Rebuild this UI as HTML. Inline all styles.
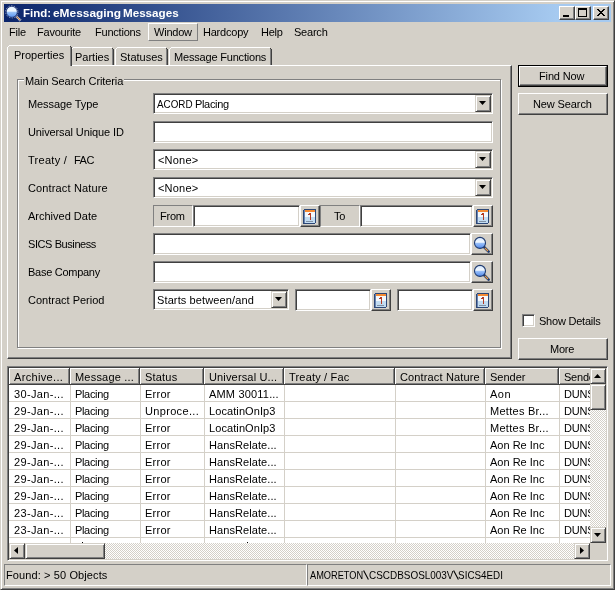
<!DOCTYPE html><html><head><meta charset="utf-8"><style>
*{box-sizing:border-box;margin:0;padding:0}
html,body{width:615px;height:590px;overflow:hidden;background:#D4D0C8;font-family:"Liberation Sans",sans-serif;font-size:11px;color:#000}
.a{position:absolute}
.t{position:absolute;white-space:nowrap;line-height:13px;letter-spacing:-0.22px}
.rb{position:absolute;background:#D4D0C8;border:1px solid;border-color:#fff #404040 #404040 #fff;box-shadow:inset -1px -1px #808080}
.sf{position:absolute;background:#fff;border:1px solid;border-color:#808080 #fff #fff #808080;box-shadow:inset 1px 1px #404040,inset -1px -1px #D4D0C8}
.st{position:absolute;border:1px solid;border-color:#808080 #fff #fff #808080}
.hc{position:absolute;top:368px;height:17px;background:#D4D0C8;border-right:1px solid #404040;border-bottom:1px solid #404040;box-shadow:inset 1px 1px #fff,inset -1px -1px #808080}
.sb{position:absolute;background:#D4D0C8;border:1px solid;border-color:#D4D0C8 #404040 #404040 #D4D0C8;box-shadow:inset 1px 1px #fff,inset -1px -1px #808080}
.chk{background-image:repeating-conic-gradient(#fff 0 25%,#D4D0C8 0 50%);background-size:2px 2px}
</style></head><body><div class="a" style="left:0;top:0;width:615px;height:590px;will-change:transform">
<div class="a" style="left:0;top:0;width:615px;height:590px;border:1px solid;border-color:#D4D0C8 #404040 #404040 #D4D0C8;box-shadow:inset 1px 1px #fff,inset -1px -1px #808080"></div>
<div class="a" style="left:4px;top:4px;width:607px;height:18px;background:linear-gradient(to right,#0A246A 0,#A6CAF0 553px);"></div>
<svg class="a" style="left:4px;top:4px" width="18" height="18" viewBox="0 0 18 18">
<defs><linearGradient id="mg" x1="0" y1="0" x2="0" y2="1"><stop offset="0" stop-color="#e4f2ff"/><stop offset="0.45" stop-color="#f0f8ff"/><stop offset="0.52" stop-color="#9cc4f8"/><stop offset="1" stop-color="#5a94f0"/></linearGradient></defs>
<line x1="12.5" y1="12.5" x2="16.6" y2="16.6" stroke="#c8ccd8" stroke-width="2.8" stroke-dasharray="1 0.6"/>
<line x1="12.8" y1="12.8" x2="16.2" y2="16.2" stroke="#f09030" stroke-width="1.1" stroke-dasharray="1 0.7"/>
<circle cx="7.8" cy="7.8" r="6.0" fill="none" stroke="#d8dee8" stroke-width="1" stroke-dasharray="1.1 1.6"/>
<circle cx="7.8" cy="7.8" r="5.5" fill="url(#mg)" stroke="#283c78" stroke-width="0.8"/>
</svg>
<div class="t" style="left:23px;top:7px;letter-spacing:0;transform:scaleX(1.0417);transform-origin:1px 0;color:#fff;font-weight:bold">Find:</div>
<div class="t" style="left:53px;top:7px;letter-spacing:0;transform:scaleX(1.0820);transform-origin:0px 0;color:#fff;font-weight:bold">eMessaging</div>
<div class="t" style="left:123px;top:7px;letter-spacing:0;transform:scaleX(1.0600);transform-origin:1px 0;color:#fff;font-weight:bold">Messages</div>
<div class="rb" style="left:559px;top:6px;width:16px;height:14px;"></div>
<div class="rb" style="left:575px;top:6px;width:16px;height:14px;"></div>
<div class="rb" style="left:593px;top:6px;width:16px;height:14px;"></div>
<div class="a" style="left:563px;top:15px;width:6px;height:2px;background:#000"></div>
<div class="a" style="left:578px;top:8px;width:9px;height:9px;border:1px solid #000;border-top-width:2px"></div>
<svg class="a" style="left:597px;top:9px" width="8" height="7" viewBox="0 0 8 7" shape-rendering="crispEdges"><path d="M0 0h1v1h-1zM1 0h1v1h-1zM6 0h1v1h-1zM7 0h1v1h-1zM1 1h1v1h-1zM2 1h1v1h-1zM5 1h1v1h-1zM6 1h1v1h-1zM2 2h1v1h-1zM3 2h1v1h-1zM4 2h1v1h-1zM5 2h1v1h-1zM3 3h1v1h-1zM4 3h1v1h-1zM2 4h1v1h-1zM3 4h1v1h-1zM4 4h1v1h-1zM5 4h1v1h-1zM1 5h1v1h-1zM2 5h1v1h-1zM5 5h1v1h-1zM6 5h1v1h-1zM0 6h1v1h-1zM1 6h1v1h-1zM6 6h1v1h-1zM7 6h1v1h-1z" fill="#000"/></svg>
<div class="t" style="left:9px;top:26px;">File</div>
<div class="t" style="left:37px;top:26px;">Favourite</div>
<div class="t" style="left:95px;top:26px;">Functions</div>
<div class="t" style="left:154px;top:26px;">Window</div>
<div class="t" style="left:203px;top:26px;">Hardcopy</div>
<div class="t" style="left:261px;top:26px;">Help</div>
<div class="t" style="left:294px;top:26px;">Search</div>
<div class="a" style="left:148px;top:23px;width:50px;height:18px;border:1px solid;border-color:#fff #808080 #808080 #fff"></div>
<div class="a" style="left:71px;top:49px;width:1px;height:16px;background:#fff;"></div>
<div class="a" style="left:72px;top:48px;width:1px;height:1px;background:#fff;"></div>
<div class="a" style="left:73px;top:47px;width:39px;height:1px;background:#fff;"></div>
<div class="a" style="left:112px;top:48px;width:1px;height:1px;background:#404040;"></div>
<div class="a" style="left:112px;top:49px;width:1px;height:16px;background:#808080;"></div>
<div class="a" style="left:113px;top:49px;width:1px;height:16px;background:#404040;"></div>
<div class="t" style="left:75px;top:51px;letter-spacing:0.000px;">Parties</div>
<div class="a" style="left:115px;top:49px;width:1px;height:16px;background:#fff;"></div>
<div class="a" style="left:116px;top:48px;width:1px;height:1px;background:#fff;"></div>
<div class="a" style="left:117px;top:47px;width:49px;height:1px;background:#fff;"></div>
<div class="a" style="left:166px;top:48px;width:1px;height:1px;background:#404040;"></div>
<div class="a" style="left:166px;top:49px;width:1px;height:16px;background:#808080;"></div>
<div class="a" style="left:167px;top:49px;width:1px;height:16px;background:#404040;"></div>
<div class="t" style="left:120px;top:51px;letter-spacing:0.000px;">Statuses</div>
<div class="a" style="left:169px;top:49px;width:1px;height:16px;background:#fff;"></div>
<div class="a" style="left:170px;top:48px;width:1px;height:1px;background:#fff;"></div>
<div class="a" style="left:171px;top:47px;width:99px;height:1px;background:#fff;"></div>
<div class="a" style="left:270px;top:48px;width:1px;height:1px;background:#404040;"></div>
<div class="a" style="left:270px;top:49px;width:1px;height:16px;background:#808080;"></div>
<div class="a" style="left:271px;top:49px;width:1px;height:16px;background:#404040;"></div>
<div class="t" style="left:174px;top:51px;letter-spacing:-0.188px;">Message Functions</div>
<div class="a" style="left:7px;top:65px;width:505px;height:294px;border:1px solid;border-color:#fff #404040 #404040 #fff;box-shadow:inset -1px -1px #808080"></div>
<div class="a" style="left:7px;top:45px;width:65px;height:21px;background:#D4D0C8;"></div>
<div class="a" style="left:7px;top:47px;width:1px;height:19px;background:#fff;"></div>
<div class="a" style="left:8px;top:46px;width:1px;height:1px;background:#fff;"></div>
<div class="a" style="left:9px;top:45px;width:61px;height:1px;background:#fff;"></div>
<div class="a" style="left:70px;top:46px;width:1px;height:1px;background:#404040;"></div>
<div class="a" style="left:70px;top:47px;width:1px;height:19px;background:#808080;"></div>
<div class="a" style="left:71px;top:47px;width:1px;height:19px;background:#404040;"></div>
<div class="t" style="left:14px;top:49px;letter-spacing:0.000px;">Properties</div>
<div class="a" style="left:17px;top:79px;width:484px;height:269px;border:1px solid #808080;box-shadow:1px 1px #fff,inset 1px 1px #fff"></div>
<div class="t" style="left:24px;top:75px;letter-spacing:-0.105px;background:#D4D0C8;padding:0 1px 0 1px">Main Search Criteria</div>
<div class="t" style="left:28px;top:98px;letter-spacing:-0.091px;">Message Type</div>
<div class="t" style="left:28px;top:126px;letter-spacing:-0.111px;">Universal Unique ID</div>
<div class="t" style="left:28px;top:154px;letter-spacing:0.286px;">Treaty /</div>
<div class="t" style="left:28px;top:182px;letter-spacing:0.143px;">Contract Nature</div>
<div class="t" style="left:28px;top:210px;letter-spacing:0.000px;">Archived Date</div>
<div class="t" style="left:28px;top:238px;letter-spacing:-0.417px;">SICS Business</div>
<div class="t" style="left:28px;top:266px;letter-spacing:-0.273px;">Base Company</div>
<div class="t" style="left:28px;top:294px;letter-spacing:0.000px;">Contract Period</div>
<div class="t" style="left:74px;top:154px;letter-spacing:-0.500px;">FAC</div>
<div class="sf" style="left:153px;top:93px;width:340px;height:21px;"></div>
<div class="sb" style="left:475px;top:95px;width:16px;height:17px;"></div>
<svg class="a" style="left:479px;top:101px" width="7" height="4" viewBox="0 0 7 4"><path d="M0 0H7L3.5 4Z" fill="#000"/></svg>
<div class="t" style="left:157px;top:98px;letter-spacing:0;transform:scaleX(0.8947);transform-origin:0px 0;">ACORD</div>
<div class="t" style="left:195px;top:98px;letter-spacing:-0.333px;">Placing</div>
<div class="sf" style="left:153px;top:121px;width:340px;height:22px;"></div>
<div class="sf" style="left:153px;top:149px;width:340px;height:21px;"></div>
<div class="t" style="left:158px;top:154px;letter-spacing:0.200px;">&lt;None&gt;</div>
<div class="sb" style="left:475px;top:151px;width:16px;height:17px;"></div>
<svg class="a" style="left:479px;top:157px" width="7" height="4" viewBox="0 0 7 4"><path d="M0 0H7L3.5 4Z" fill="#000"/></svg>
<div class="sf" style="left:153px;top:177px;width:340px;height:21px;"></div>
<div class="t" style="left:158px;top:182px;letter-spacing:0.200px;">&lt;None&gt;</div>
<div class="sb" style="left:475px;top:179px;width:16px;height:17px;"></div>
<svg class="a" style="left:479px;top:185px" width="7" height="4" viewBox="0 0 7 4"><path d="M0 0H7L3.5 4Z" fill="#000"/></svg>
<div class="st" style="left:153px;top:205px;width:40px;height:22px;"></div>
<div class="t" style="left:160px;top:210px;">From</div>
<div class="sf" style="left:193px;top:205px;width:107px;height:22px;"></div>
<div class="rb" style="left:300px;top:205px;width:20px;height:22px;"></div>
<svg class="a" style="left:303px;top:209px" width="13" height="15" viewBox="0 0 13 15" shape-rendering="crispEdges">
<rect x="0" y="0" width="13" height="15" rx="2" fill="#2B4676"/>
<rect x="1" y="1" width="11" height="13" fill="#fff"/>
<rect x="1" y="1" width="1" height="13" fill="#6a84b0"/>
<rect x="2" y="8" width="10" height="6" fill="#C2DCF2"/>
<rect x="2" y="1" width="10" height="2" fill="#F58A33"/>
<rect x="2" y="3" width="10" height="5" fill="#F4F8FC"/>
<path d="M5 5H6V4H8V11H7V6H5Z" fill="#B33A22"/>
<rect x="3" y="12" width="7" height="1" fill="#8090A4"/>
</svg>
<div class="st" style="left:320px;top:205px;width:40px;height:22px;"></div>
<div class="t" style="left:334px;top:210px;">To</div>
<div class="sf" style="left:360px;top:205px;width:113px;height:22px;"></div>
<div class="rb" style="left:473px;top:205px;width:20px;height:22px;"></div>
<svg class="a" style="left:476px;top:209px" width="13" height="15" viewBox="0 0 13 15" shape-rendering="crispEdges">
<rect x="0" y="0" width="13" height="15" rx="2" fill="#2B4676"/>
<rect x="1" y="1" width="11" height="13" fill="#fff"/>
<rect x="1" y="1" width="1" height="13" fill="#6a84b0"/>
<rect x="2" y="8" width="10" height="6" fill="#C2DCF2"/>
<rect x="2" y="1" width="10" height="2" fill="#F58A33"/>
<rect x="2" y="3" width="10" height="5" fill="#F4F8FC"/>
<path d="M5 5H6V4H8V11H7V6H5Z" fill="#B33A22"/>
<rect x="3" y="12" width="7" height="1" fill="#8090A4"/>
</svg>
<div class="sf" style="left:153px;top:233px;width:318px;height:22px;"></div>
<div class="rb" style="left:471px;top:233px;width:22px;height:22px;"></div>
<svg class="a" style="left:473px;top:236px" width="17" height="17" viewBox="0 0 17 17">
<defs><linearGradient id="mg1" x1="0" y1="0" x2="0" y2="1"><stop offset="0" stop-color="#cfe4ff"/><stop offset="0.44" stop-color="#f4faff"/><stop offset="0.52" stop-color="#9cc2fa"/><stop offset="1" stop-color="#4f88ec"/></linearGradient></defs>
<line x1="11" y1="11" x2="15.6" y2="15.6" stroke="#1f3b70" stroke-width="2.6" stroke-linecap="round"/>
<line x1="11.8" y1="11.8" x2="15" y2="15" stroke="#f6a040" stroke-width="1.1"/>
<circle cx="7" cy="6.9" r="5.5" fill="url(#mg1)" stroke="#1f3b70" stroke-width="1.1"/>
</svg>
<div class="sf" style="left:153px;top:261px;width:318px;height:22px;"></div>
<div class="rb" style="left:471px;top:261px;width:22px;height:22px;"></div>
<svg class="a" style="left:473px;top:264px" width="17" height="17" viewBox="0 0 17 17">
<defs><linearGradient id="mg2" x1="0" y1="0" x2="0" y2="1"><stop offset="0" stop-color="#cfe4ff"/><stop offset="0.44" stop-color="#f4faff"/><stop offset="0.52" stop-color="#9cc2fa"/><stop offset="1" stop-color="#4f88ec"/></linearGradient></defs>
<line x1="11" y1="11" x2="15.6" y2="15.6" stroke="#1f3b70" stroke-width="2.6" stroke-linecap="round"/>
<line x1="11.8" y1="11.8" x2="15" y2="15" stroke="#f6a040" stroke-width="1.1"/>
<circle cx="7" cy="6.9" r="5.5" fill="url(#mg2)" stroke="#1f3b70" stroke-width="1.1"/>
</svg>
<div class="sf" style="left:153px;top:289px;width:136px;height:21px;"></div>
<div class="t" style="left:157px;top:294px;letter-spacing:0.118px;">Starts between/and</div>
<div class="sb" style="left:271px;top:291px;width:16px;height:17px;"></div>
<svg class="a" style="left:275px;top:297px" width="7" height="4" viewBox="0 0 7 4"><path d="M0 0H7L3.5 4Z" fill="#000"/></svg>
<div class="sf" style="left:295px;top:289px;width:76px;height:22px;"></div>
<div class="rb" style="left:371px;top:289px;width:20px;height:22px;"></div>
<svg class="a" style="left:374px;top:293px" width="13" height="15" viewBox="0 0 13 15" shape-rendering="crispEdges">
<rect x="0" y="0" width="13" height="15" rx="2" fill="#2B4676"/>
<rect x="1" y="1" width="11" height="13" fill="#fff"/>
<rect x="1" y="1" width="1" height="13" fill="#6a84b0"/>
<rect x="2" y="8" width="10" height="6" fill="#C2DCF2"/>
<rect x="2" y="1" width="10" height="2" fill="#F58A33"/>
<rect x="2" y="3" width="10" height="5" fill="#F4F8FC"/>
<path d="M5 5H6V4H8V11H7V6H5Z" fill="#B33A22"/>
<rect x="3" y="12" width="7" height="1" fill="#8090A4"/>
</svg>
<div class="sf" style="left:397px;top:289px;width:76px;height:22px;"></div>
<div class="rb" style="left:473px;top:289px;width:20px;height:22px;"></div>
<svg class="a" style="left:476px;top:293px" width="13" height="15" viewBox="0 0 13 15" shape-rendering="crispEdges">
<rect x="0" y="0" width="13" height="15" rx="2" fill="#2B4676"/>
<rect x="1" y="1" width="11" height="13" fill="#fff"/>
<rect x="1" y="1" width="1" height="13" fill="#6a84b0"/>
<rect x="2" y="8" width="10" height="6" fill="#C2DCF2"/>
<rect x="2" y="1" width="10" height="2" fill="#F58A33"/>
<rect x="2" y="3" width="10" height="5" fill="#F4F8FC"/>
<path d="M5 5H6V4H8V11H7V6H5Z" fill="#B33A22"/>
<rect x="3" y="12" width="7" height="1" fill="#8090A4"/>
</svg>
<div class="a" style="left:518px;top:65px;width:90px;height:22px;border:1px solid #000"></div>
<div class="rb" style="left:519px;top:66px;width:88px;height:20px;"></div>
<div class="t" style="left:539px;top:70px;letter-spacing:-0.143px;">Find Now</div>
<div class="rb" style="left:518px;top:93px;width:90px;height:22px;"></div>
<div class="t" style="left:533px;top:98px;letter-spacing:-0.111px;">New Search</div>
<div class="sf" style="left:522px;top:314px;width:13px;height:13px;"></div>
<div class="t" style="left:539px;top:315px;">Show Details</div>
<div class="rb" style="left:518px;top:338px;width:90px;height:22px;"></div>
<div class="t" style="left:550px;top:343px;">More</div>
<div class="a" style="left:7px;top:366px;width:601px;height:195px;background:#fff;border:1px solid;border-color:#808080 #fff #fff #808080;box-shadow:inset 1px 1px #404040,inset -1px -1px #D4D0C8"></div>
<div class="a" style="left:9px;top:368px;width:581px;height:175px;overflow:hidden">
<div class="a" style="left:0px;top:33px;width:600px;height:1px;background:#D4D0C8;"></div>
<div class="a" style="left:0px;top:50px;width:600px;height:1px;background:#D4D0C8;"></div>
<div class="a" style="left:0px;top:67px;width:600px;height:1px;background:#D4D0C8;"></div>
<div class="a" style="left:0px;top:84px;width:600px;height:1px;background:#D4D0C8;"></div>
<div class="a" style="left:0px;top:101px;width:600px;height:1px;background:#D4D0C8;"></div>
<div class="a" style="left:0px;top:118px;width:600px;height:1px;background:#D4D0C8;"></div>
<div class="a" style="left:0px;top:135px;width:600px;height:1px;background:#D4D0C8;"></div>
<div class="a" style="left:0px;top:152px;width:600px;height:1px;background:#D4D0C8;"></div>
<div class="a" style="left:0px;top:169px;width:600px;height:1px;background:#D4D0C8;"></div>
<div class="a" style="left:0px;top:186px;width:600px;height:1px;background:#D4D0C8;"></div>
<div class="a" style="left:61px;top:17px;width:1px;height:200px;background:#D4D0C8;"></div>
<div class="a" style="left:131px;top:17px;width:1px;height:200px;background:#D4D0C8;"></div>
<div class="a" style="left:195px;top:17px;width:1px;height:200px;background:#D4D0C8;"></div>
<div class="a" style="left:275px;top:17px;width:1px;height:200px;background:#D4D0C8;"></div>
<div class="a" style="left:386px;top:17px;width:1px;height:200px;background:#D4D0C8;"></div>
<div class="a" style="left:476px;top:17px;width:1px;height:200px;background:#D4D0C8;"></div>
<div class="a" style="left:550px;top:17px;width:1px;height:200px;background:#D4D0C8;"></div>
<div class="t" style="left:5px;top:20px;letter-spacing:0.333px;">30-Jan-...</div>
<div class="t" style="left:66px;top:20px;letter-spacing:-0.333px;">Placing</div>
<div class="t" style="left:136px;top:20px;letter-spacing:0.250px;">Error</div>
<div class="t" style="left:200px;top:20px;letter-spacing:0.182px;">AMM 30011...</div>
<div class="t" style="left:481px;top:20px;letter-spacing:0.500px;">Aon</div>
<div class="t" style="left:555px;top:20px;">DUNS</div>
<div class="t" style="left:5px;top:37px;letter-spacing:0.333px;">29-Jan-...</div>
<div class="t" style="left:66px;top:37px;letter-spacing:-0.333px;">Placing</div>
<div class="t" style="left:136px;top:37px;letter-spacing:0.333px;">Unproce...</div>
<div class="t" style="left:200px;top:37px;letter-spacing:0.091px;">LocatinOnIp3</div>
<div class="t" style="left:481px;top:37px;letter-spacing:0.273px;">Mettes Br...</div>
<div class="t" style="left:555px;top:37px;">DUNS</div>
<div class="t" style="left:5px;top:54px;letter-spacing:0.333px;">29-Jan-...</div>
<div class="t" style="left:66px;top:54px;letter-spacing:-0.333px;">Placing</div>
<div class="t" style="left:136px;top:54px;letter-spacing:0.250px;">Error</div>
<div class="t" style="left:200px;top:54px;letter-spacing:0.091px;">LocatinOnIp3</div>
<div class="t" style="left:481px;top:54px;letter-spacing:0.273px;">Mettes Br...</div>
<div class="t" style="left:555px;top:54px;">DUNS</div>
<div class="t" style="left:5px;top:71px;letter-spacing:0.333px;">29-Jan-...</div>
<div class="t" style="left:66px;top:71px;letter-spacing:-0.333px;">Placing</div>
<div class="t" style="left:136px;top:71px;letter-spacing:0.250px;">Error</div>
<div class="t" style="left:200px;top:71px;letter-spacing:0.083px;">HansRelate...</div>
<div class="t" style="left:481px;top:71px;letter-spacing:0.000px;">Aon Re Inc</div>
<div class="t" style="left:555px;top:71px;">DUNS</div>
<div class="t" style="left:5px;top:88px;letter-spacing:0.333px;">29-Jan-...</div>
<div class="t" style="left:66px;top:88px;letter-spacing:-0.333px;">Placing</div>
<div class="t" style="left:136px;top:88px;letter-spacing:0.250px;">Error</div>
<div class="t" style="left:200px;top:88px;letter-spacing:0.083px;">HansRelate...</div>
<div class="t" style="left:481px;top:88px;letter-spacing:0.000px;">Aon Re Inc</div>
<div class="t" style="left:555px;top:88px;">DUNS</div>
<div class="t" style="left:5px;top:105px;letter-spacing:0.333px;">29-Jan-...</div>
<div class="t" style="left:66px;top:105px;letter-spacing:-0.333px;">Placing</div>
<div class="t" style="left:136px;top:105px;letter-spacing:0.250px;">Error</div>
<div class="t" style="left:200px;top:105px;letter-spacing:0.083px;">HansRelate...</div>
<div class="t" style="left:481px;top:105px;letter-spacing:0.000px;">Aon Re Inc</div>
<div class="t" style="left:555px;top:105px;">DUNS</div>
<div class="t" style="left:5px;top:122px;letter-spacing:0.333px;">29-Jan-...</div>
<div class="t" style="left:66px;top:122px;letter-spacing:-0.333px;">Placing</div>
<div class="t" style="left:136px;top:122px;letter-spacing:0.250px;">Error</div>
<div class="t" style="left:200px;top:122px;letter-spacing:0.083px;">HansRelate...</div>
<div class="t" style="left:481px;top:122px;letter-spacing:0.000px;">Aon Re Inc</div>
<div class="t" style="left:555px;top:122px;">DUNS</div>
<div class="t" style="left:5px;top:139px;letter-spacing:0.333px;">23-Jan-...</div>
<div class="t" style="left:66px;top:139px;letter-spacing:-0.333px;">Placing</div>
<div class="t" style="left:136px;top:139px;letter-spacing:0.250px;">Error</div>
<div class="t" style="left:200px;top:139px;letter-spacing:0.083px;">HansRelate...</div>
<div class="t" style="left:481px;top:139px;letter-spacing:0.000px;">Aon Re Inc</div>
<div class="t" style="left:555px;top:139px;">DUNS</div>
<div class="t" style="left:5px;top:156px;letter-spacing:0.333px;">23-Jan-...</div>
<div class="t" style="left:66px;top:156px;letter-spacing:-0.333px;">Placing</div>
<div class="t" style="left:136px;top:156px;letter-spacing:0.250px;">Error</div>
<div class="t" style="left:200px;top:156px;letter-spacing:0.083px;">HansRelate...</div>
<div class="t" style="left:481px;top:156px;letter-spacing:0.000px;">Aon Re Inc</div>
<div class="t" style="left:555px;top:156px;">DUNS</div>
<div class="t" style="left:5px;top:173px;letter-spacing:0.333px;">23-Jan-...</div>
<div class="t" style="left:66px;top:173px;letter-spacing:-0.333px;">Placing</div>
<div class="t" style="left:136px;top:173px;letter-spacing:0.250px;">Error</div>
<div class="t" style="left:200px;top:173px;letter-spacing:0.083px;">HansRelate...</div>
<div class="t" style="left:481px;top:173px;letter-spacing:0.000px;">Aon Re Inc</div>
<div class="t" style="left:555px;top:173px;">DUNS</div>
<div class="hc" style="left:0px;top:0;width:61px"></div>
<div class="t" style="left:5px;top:3px;letter-spacing:0.333px;">Archive...</div>
<div class="hc" style="left:61px;top:0;width:70px"></div>
<div class="t" style="left:66px;top:3px;letter-spacing:0.200px;">Message ...</div>
<div class="hc" style="left:131px;top:0;width:64px"></div>
<div class="t" style="left:136px;top:3px;letter-spacing:0.200px;">Status</div>
<div class="hc" style="left:195px;top:0;width:80px"></div>
<div class="t" style="left:200px;top:3px;letter-spacing:0.154px;">Universal U...</div>
<div class="hc" style="left:275px;top:0;width:111px"></div>
<div class="t" style="left:280px;top:3px;letter-spacing:0.182px;">Treaty / Fac</div>
<div class="hc" style="left:386px;top:0;width:90px"></div>
<div class="t" style="left:391px;top:3px;letter-spacing:0.143px;">Contract Nature</div>
<div class="hc" style="left:476px;top:0;width:74px"></div>
<div class="t" style="left:481px;top:3px;letter-spacing:0.000px;">Sender</div>
<div class="hc" style="left:550px;top:0;width:60px"></div>
<div class="t" style="left:555px;top:3px;">Sender</div>
</div>
<div class="a" style="left:82px;top:542px;width:1px;height:1px;background:#000;"></div>
<div class="a" style="left:247px;top:542px;width:1px;height:1px;background:#000;"></div>
<div class="a chk" style="left:590px;top:368px;width:16px;height:175px"></div>
<div class="sb" style="left:590px;top:368px;width:16px;height:16px;"></div>
<svg class="a" style="left:594px;top:374px" width="7" height="4" viewBox="0 0 7 4"><path d="M0 4H7L3.5 0Z" fill="#000"/></svg>
<div class="sb" style="left:590px;top:384px;width:16px;height:26px;"></div>
<div class="sb" style="left:590px;top:527px;width:16px;height:16px;"></div>
<svg class="a" style="left:594px;top:533px" width="7" height="4" viewBox="0 0 7 4"><path d="M0 0H7L3.5 4Z" fill="#000"/></svg>
<div class="a chk" style="left:9px;top:543px;width:581px;height:16px"></div>
<div class="sb" style="left:9px;top:543px;width:16px;height:16px;"></div>
<svg class="a" style="left:14px;top:547px" width="4" height="7" viewBox="0 0 4 7"><path d="M4 0V7L0 3.5Z" fill="#000"/></svg>
<div class="sb" style="left:25px;top:543px;width:80px;height:16px;"></div>
<div class="sb" style="left:574px;top:543px;width:16px;height:16px;"></div>
<svg class="a" style="left:580px;top:547px" width="4" height="7" viewBox="0 0 4 7"><path d="M0 0V7L4 3.5Z" fill="#000"/></svg>
<div class="a" style="left:590px;top:543px;width:16px;height:16px;background:#D4D0C8;"></div>
<div class="st" style="left:4px;top:564px;width:303px;height:22px;"></div>
<div class="t" style="left:6px;top:569px;letter-spacing:0.111px;">Found: &gt; 50 Objects</div>
<div class="st" style="left:307px;top:564px;width:304px;height:22px;"></div>
<div class="t" style="left:310px;top:569px;letter-spacing:0;transform:scaleX(0.8387);transform-origin:0px 0;">AMORETON</div>
<svg class="a" style="left:363px;top:570px" width="6" height="10"><path d="M0.6 0.5L5.4 9.5" stroke="#000" stroke-width="1.1"/></svg>
<div class="t" style="left:369px;top:569px;letter-spacing:0;transform:scaleX(0.9032);transform-origin:0px 0;">CSCDBSOSL003V</div>
<svg class="a" style="left:453px;top:570px" width="6" height="10"><path d="M0.6 0.5L5.4 9.5" stroke="#000" stroke-width="1.1"/></svg>
<div class="t" style="left:458px;top:569px;letter-spacing:0;transform:scaleX(0.8936);transform-origin:1px 0;">SICS4EDI</div>
</div></body></html>
